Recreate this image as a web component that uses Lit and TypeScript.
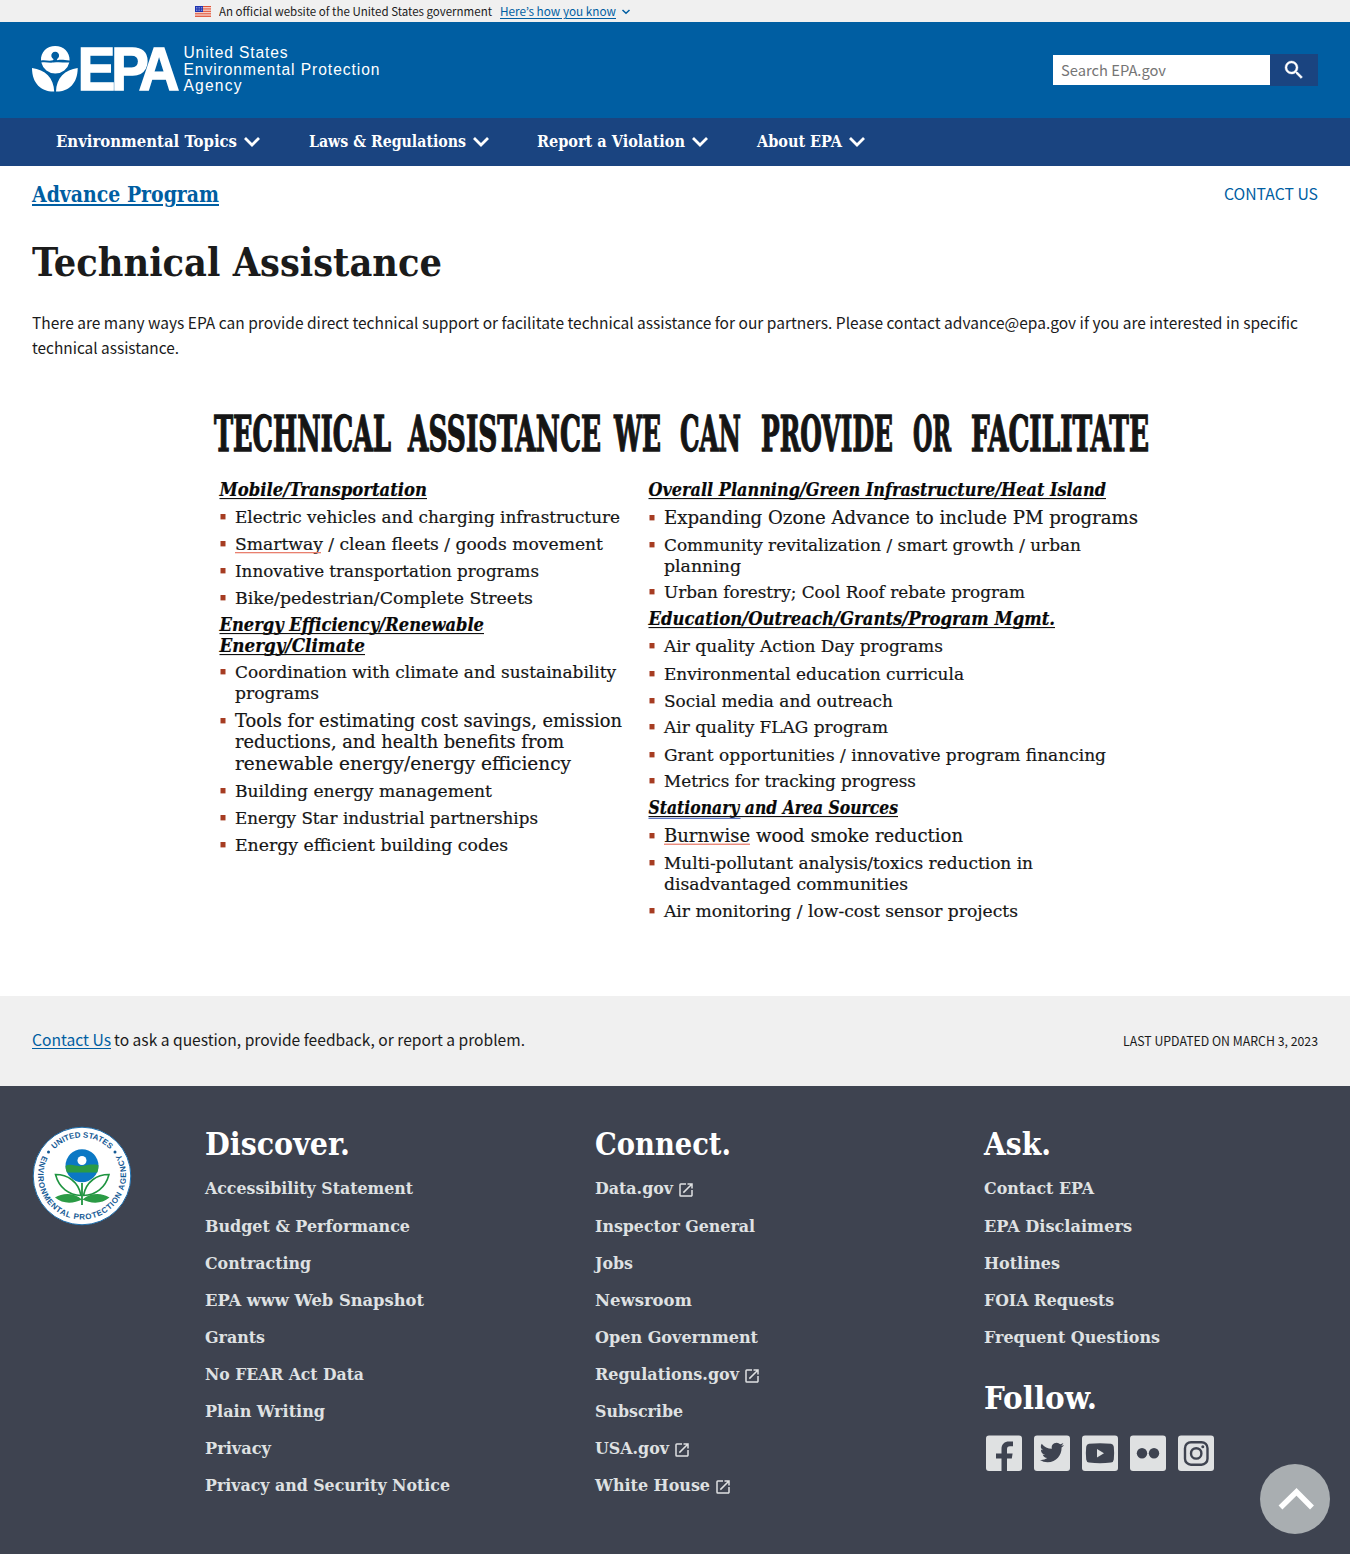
import { LitElement, html, css, svg, nothing } from "lit";
import { customElement, property } from "lit/decorators.js";

/** One line of text set to an exact measure. */
@customElement("epa-line")
export class EpaLine extends LitElement {
  @property({ type: Number }) measure = 0;
  static styles = css`
    :host { display: inline-block; white-space: nowrap; text-align: left; }
    .t { display: inline-block; transform-origin: 0 50%; text-decoration: var(--line-decoration, none); text-underline-offset: var(--line-offset, 2px); }
  `;
  render() { return html`<span class="t"><slot></slot></span>`; }
  firstUpdated() {
    this.fit();
    document.fonts.ready.then(() => this.fit());
  }
  fit() {
    const t = this.renderRoot.querySelector(".t") as HTMLElement;
    t.style.transform = "none";
    const natural = t.getBoundingClientRect().width;
    if (!natural || !this.measure) return;
    this.style.width = `${this.measure}px`;
    t.style.transform = `scaleX(${this.measure / natural})`;
  }
}

type Row = [kind: "h" | "b" | "c", text: string, x2: number, y: number, size?: number];

const LEFT: Row[] = [
  ["h", "Mobile/Transportation", 427, 496],
  ["b", "Electric vehicles and charging infrastructure", 620, 523],
  ["b", "Smartway / clean fleets / goods movement", 603, 550],
  ["b", "Innovative transportation programs", 539, 577],
  ["b", "Bike/pedestrian/Complete Streets", 533, 604],
  ["h", "Energy Efficiency/Renewable", 484, 631],
  ["h", "Energy/Climate", 365, 652],
  ["b", "Coordination with climate and sustainability", 616, 678],
  ["c", "programs", 319, 699],
  ["b", "Tools for estimating cost savings, emission", 622, 727, 18],
  ["c", "reductions, and health benefits from", 564, 748, 18],
  ["c", "renewable energy/energy efficiency", 571, 770, 18],
  ["b", "Building energy management", 492, 797],
  ["b", "Energy Star industrial partnerships", 538, 824],
  ["b", "Energy efficient building codes", 508, 851],
];
const RIGHT: Row[] = [
  ["h", "Overall Planning/Green Infrastructure/Heat Island", 1106, 496],
  ["b", "Expanding Ozone Advance to include PM programs", 1138, 524, 18],
  ["b", "Community revitalization / smart growth / urban", 1081, 551],
  ["c", "planning", 741, 572],
  ["b", "Urban forestry; Cool Roof rebate program", 1025, 598],
  ["h", "Education/Outreach/Grants/Program Mgmt.", 1055, 625],
  ["b", "Air quality Action Day programs", 943, 652],
  ["b", "Environmental education curricula", 964, 680],
  ["b", "Social media and outreach", 893, 707],
  ["b", "Air quality FLAG program", 888, 733],
  ["b", "Grant opportunities / innovative program financing", 1106, 761],
  ["b", "Metrics for tracking progress", 916, 787],
  ["h", "Stationary and Area Sources", 898, 814],
  ["b", "Burnwise wood smoke reduction", 963, 842, 18],
  ["b", "Multi-pollutant analysis/toxics reduction in", 1033, 869],
  ["c", "disadvantaged communities", 908, 890],
  ["b", "Air monitoring / low-cost sensor projects", 1018, 917],
];
const TITLE: [string, number, number][] = [
  ["TECHNICAL", 214, 391], ["ASSISTANCE", 408, 601], ["WE", 614, 661], ["CAN", 680, 741],
  ["PROVIDE", 761, 893], ["OR", 913, 951], ["FACILITATE", 971, 1149],
];
const SQUEEZE = 0.55;

@customElement("assistance-slide")
export class AssistanceSlide extends LitElement {
  static styles = css`
    :host { display: block; }
    svg { display: block; }
    text { font-family: "DejaVu Serif", serif; fill: #151515; stroke: #151515; stroke-width: .2px; }
    .title { font-family: "DejaVu Serif Condensed", "DejaVu Serif", serif; font-weight: 700; font-size: 48.5px; stroke-width: 1.300px; }
    .h { font-weight: 700; font-style: italic; fill: #080808; }
  `;
  col(rows: Row[], left: number) {
    return rows.map(([kind, text, x2, y, size]) => {
      const x = kind === "h" ? left : left + 15.5;
      return svg`
        ${kind === "b" ? svg`<rect x=${left + 1} y=${y - 9} width="5" height="5.4" fill="#a63c22"></rect>` : nothing}
        <text class=${kind} x=${x} y=${y} font-size=${size ?? (kind === "h" ? 17.7 : 17.4)} textLength=${x2 - x} lengthAdjust="spacingAndGlyphs">${text}</text>
        ${kind === "h" ? svg`<rect x=${left} y=${y + 2} width=${x2 - left} height="1.1" fill="#111"></rect>` : nothing}`;
    });
  }
  render() {
    return html`<svg width="960" height="580" viewBox="195 385 960 580">
      ${TITLE.map(([w, a, b]) => svg`<g transform=${`translate(${a} 451) scale(${SQUEEZE} 1)`}><text class="title" textLength=${(b - a) / SQUEEZE} lengthAdjust="spacingAndGlyphs">${w}</text></g>`)}
      ${this.col(LEFT, 219.5)}
      ${this.col(RIGHT, 648.5)}
      <rect x="235" y="552" width="86" height="1.3" fill="#e9806f"></rect>
      <rect x="664" y="843.6" width="86" height="1.3" fill="#e9806f"></rect>
      <rect x="648.5" y="817.8" width="92" height="1.2" fill="#5b74c8"></rect>
    </svg>`;
  }
}

const ext = html`<svg class="ext" width="18" height="18" viewBox="0 0 24 24"><path fill="currentColor" d="M19 19H5V5h7V3H5a2 2 0 0 0-2 2v14a2 2 0 0 0 2 2h14c1.100 0 2-.9 2-2v-7h-2v7zM14 3v2h3.590l-9.830 9.830 1.410 1.410L19 6.410V10h2V3h-7z"/></svg>`;
const chev = html`<svg class="chev" width="18" height="12" viewBox="0 0 18 12"><path d="M2 2l7 7 7-7" fill="none" stroke="#fff" stroke-width="2.800"/></svg>`;

type Link = [text: string, width: number, external?: boolean];
const DISCOVER: Link[] = [["Accessibility Statement", 208], ["Budget & Performance", 205], ["Contracting", 106], ["EPA www Web Snapshot", 219], ["Grants", 60], ["No FEAR Act Data", 159], ["Plain Writing", 120], ["Privacy", 66], ["Privacy and Security Notice", 245]];
const CONNECT: Link[] = [["Data.gov", 78, true], ["Inspector General", 160], ["Jobs", 38], ["Newsroom", 97], ["Open Government", 163], ["Regulations.gov", 144, true], ["Subscribe", 88], ["USA.gov", 74, true], ["White House", 115, true]];
const ASK: Link[] = [["Contact EPA", 110], ["EPA Disclaimers", 148], ["Hotlines", 76], ["FOIA Requests", 130], ["Frequent Questions", 176]];
const NAV: [string, number][] = [["Environmental Topics", 181], ["Laws & Regulations", 157], ["Report a Violation", 148], ["About EPA", 85]];

@customElement("app-root")
export class AppRoot extends LitElement {
  static styles = css`
    :host { display: block; width: 1350px; height: 1554px; background: #fff; color: #1b1b1b;
      font-family: "Noto Sans CJK KR", "Open Sans", sans-serif; font-size: 15.3px; line-height: 25px; overflow: hidden; position: relative; }
    svg { display: block; flex: none; }
    a { color: #005ea2; cursor: pointer; }
    .u { --line-decoration: underline 1px; }
    .serif { font-family: "DejaVu Serif Condensed", "DejaVu Serif", serif; font-weight: 700; }
    .banner { height: 22px; background: #f0f0f0; display: flex; align-items: center; padding-left: 195px; font-size: 11.4px; line-height: 22px; }
    .banner .flag { margin-right: 8px; }
    .banner a { margin-left: 8px; }
    .banner .mini { margin-left: 5px; margin-top: 2px; }
    .head { height: 96px; background: #005ea2; display: flex; justify-content: space-between; padding: 0 32px; }
    .brand { margin-top: 6px; }
    .brand text { font-family: "Liberation Sans", sans-serif; fill: #fff; }
    .epa { font-weight: 700; font-size: 60.5px; stroke: #fff; stroke-width: 1.6px; }
    .sub { font-size: 15.6px; }
    .search { display: flex; height: 32px; margin-top: 32px; }
    .field { width: 209px; height: 30px; margin-top: 1px; background: #fff; color: #757575; padding-left: 8px; line-height: 30px; font-size: 14.500px; }
    .go { width: 48px; height: 32px; background: #1a4480; display: flex; align-items: center; justify-content: center; }
    .nav { height: 48px; background: #1a4480; color: #fff; display: flex; padding-left: 56px; font-size: 16px; line-height: 46px; }
    .item { display: flex; align-items: center; margin-right: 47.500px; }
    .item .chev { margin-left: 6px; }
    .main { height: 830px; padding: 0 32px; box-sizing: border-box; }
    .crumb { display: flex; justify-content: space-between; padding-top: 12px; height: 32px; line-height: 30px; }
    .site { font-size: 21.800px; line-height: 34px; --line-decoration: underline 2px; --line-offset: 2px; }
    h1 { margin: 28px 0 0; font-size: 39px; line-height: 48px; height: 48px; }
    h1 epa-line { display: block; }
    .intro { margin: 24px 0 0; height: 50px; }
    .intro epa-line { display: block; height: 25px; }
    assistance-slide { margin: 25px 0 0 163px; }
    .feedback { height: 90px; background: #f0f0f0; padding: 0 32px; display: flex; justify-content: space-between; line-height: 86px; }
    .ask { display: flex; gap: 3px; }
    .updated { font-size: 12.500px; line-height: 90px; }
    .foot { height: 468px; background: #3e4350; display: grid; grid-template-columns: 173px 390px 389px 1fr; padding: 0 0 0 32px; color: #fff; }
    .seal { margin-top: 40px; }
    .seal text { font-family: "Liberation Sans", sans-serif; font-size: 8px; font-weight: 700; fill: #155a95; }
    h2 { margin: 38px 0 5.800px; font-size: 32px; line-height: 40px; height: 40px; }
    h2.follow { margin: 22.200px 0 17px; }
    .link { display: flex; height: 37.150px; align-items: center; color: #dfe1e2; font-size: 17.400px; line-height: 34px; }
    .ext { margin: 3px 0 0 4px; }
    .social { display: flex; gap: 12px; padding-left: 2px; }
    .top { position: absolute; left: 1260px; top: 1464px; }
  `;
  list(items: Link[]) {
    return items.map(([t, w, e]) => html`<div class="link serif"><epa-line measure=${w}>${t}</epa-line>${e ? ext : nothing}</div>`);
  }
  render() {
    return html`
      <div class="banner">
        <svg class="flag" width="16" height="11" viewBox="0 0 16 11"><rect width="16" height="11" fill="#fff"/><path d="M0 .5h16M0 2.200h16M0 3.900h16M0 5.600h16M0 7.300h16M0 9h16M0 10.600h16" stroke="#db3e1f" stroke-width=".9"/><rect width="8" height="6" fill="#1e33b1"/><path d="M1 1.500h7M1 3h7M1 4.500h7" stroke="#fff" stroke-width=".6" stroke-dasharray=".7 1"/></svg>
        <epa-line measure="273">An official website of the United States government</epa-line>
        <a class="u"><epa-line measure="116">Here’s how you know</epa-line></a>
        <svg class="mini" width="10" height="8" viewBox="0 0 10 8"><path d="M1.500 2L5 5.300 8.500 2" fill="none" stroke="#005ea2" stroke-width="1.500"/></svg>
      </div>
      <div class="head">
        <svg class="brand" width="350" height="84" viewBox="32 28 350 84">
          <path fill="#fff" d="M41 60.500C40.500 52 47 46 55.200 46S70 52 69.600 60.500C64 60 61 59.300 57.500 60.300L56.800 59.200A3.900 3.900 0 1 0 53.600 59.200L53 60.300C49 61.200 46 60 41 60.500zM41.300 62.600C46 61.800 49 63.200 53.500 62.600 60 61.400 64 63 69.300 62.400A14.300 14.300 0 0 1 55.300 73.500 14.300 14.300 0 0 1 41.300 62.600z"/>
          <path fill="#fff" d="M32 68C45 69.500 54 78 54.200 91.600 42 92 32 84 32 68zM77.700 68C65 69.500 56.300 78 56 91.600 68 92 77.700 84 77.700 68z"/>
          <g transform="translate(77.800 89.800) scale(.93 1)"><text class="epa" x="0 36 65.500" y="0">EPA</text></g>
          <text class="sub" x="183.500" y="58" textLength="104">United States</text>
          <text class="sub" x="183.500" y="74.700" textLength="196">Environmental Protection</text>
          <text class="sub" x="183.500" y="91.200" textLength="58">Agency</text>
        </svg>
        <div class="search">
          <div class="field"><epa-line measure="105">Search EPA.gov</epa-line></div>
          <div class="go"><svg width="24" height="24" viewBox="0 0 24 24"><path fill="#fff" stroke="#fff" stroke-width=".4" d="M15.500 14h-.79l-.28-.27A6.470 6.470 0 0 0 16 9.500 6.500 6.500 0 1 0 9.500 16c1.610 0 3.090-.59 4.230-1.570l.27.28v.79l5 4.990L20.490 19l-4.990-5zm-6 0C7.010 14 5 11.990 5 9.500S7.010 5 9.500 5 14 7.010 14 9.500 11.990 14 9.500 14z"/></svg></div>
        </div>
      </div>
      <div class="nav serif">${NAV.map(([t, w]) => html`<div class="item"><epa-line measure=${w}>${t}</epa-line>${chev}</div>`)}</div>
      <div class="main">
        <div class="crumb">
          <a class="site serif"><epa-line measure="187">Advance Program</epa-line></a>
          <a><epa-line measure="94">CONTACT US</epa-line></a>
        </div>
        <h1 class="serif"><epa-line measure="410">Technical Assistance</epa-line></h1>
        <p class="intro">
          <epa-line measure="1266">There are many ways EPA can provide direct technical support or facilitate technical assistance for our partners. Please contact advance@epa.gov if you are interested in specific</epa-line>
          <epa-line measure="147">technical assistance.</epa-line>
        </p>
        <assistance-slide></assistance-slide>
      </div>
      <div class="feedback">
        <div class="ask"><a class="u"><epa-line measure="79">Contact Us</epa-line></a><epa-line measure="411">to ask a question, provide feedback, or report a problem.</epa-line></div>
        <epa-line class="updated" measure="195">LAST UPDATED ON MARCH 3, 2023</epa-line>
      </div>
      <div class="foot">
        <svg class="seal" width="100" height="100" viewBox="0 0 100 100">
          <circle cx="50" cy="50" r="48.800" fill="#fff" stroke="#1d6fae" stroke-width="1"/>
          <defs><path id="arcTop" d="M11.500 50A38.500 38.500 0 0 1 88.500 50"/><path id="arcBot" d="M14.500 23.500A44 44 0 1 0 85.500 23.500"/></defs>
          <text><textPath href="#arcTop" startOffset="29.500" textLength="62">UNITED STATES</textPath></text>
          <text><textPath href="#arcBot" startOffset="7" textLength="181">ENVIRONMENTAL PROTECTION AGENCY</textPath></text>
          <circle cx="16.500" cy="26" r="1.500" fill="#155a95"/><circle cx="83" cy="26" r="1.500" fill="#155a95"/>
          <circle cx="50" cy="39.700" r="16.500" fill="#0b78c4"/>
          <path d="M33.600 40c6-3 10 1 16 0s10-2 16.700-1c.3 2.500-.2 5-1 7.500H35c-1-2.300-1.400-4-1.400-6.500z" fill="#2b9b45"/>
          <circle cx="50" cy="34.500" r="4.500" fill="#fff"/>
          <path d="M50 57v22" stroke="#1f9440" stroke-width="1.800"/>
          <path d="M23.500 48.500c12 0 23 7 25.500 21-12-.5-22-7.500-25.500-21zM77 48.500c-12 0-23 7-25.500 21 12-.5 22-7.500 25.500-21z" fill="#fff" stroke="#1f9440" stroke-width="1.600"/>
          <path d="M23 71.500c8-5 19-5 27 2-8 4-19 5-27-2zM77.500 71.500c-8-5-19-5-27 2 8 4 19 5 27-2z" fill="#2b9b45"/>
        </svg>
        <div><h2 class="serif"><epa-line measure="145">Discover.</epa-line></h2>${this.list(DISCOVER)}</div>
        <div><h2 class="serif"><epa-line measure="136">Connect.</epa-line></h2>${this.list(CONNECT)}</div>
        <div><h2 class="serif"><epa-line measure="67">Ask.</epa-line></h2>${this.list(ASK)}
          <h2 class="serif follow"><epa-line measure="113">Follow.</epa-line></h2>
          <div class="social">
            <svg width="36" height="36" viewBox="0 0 36 36"><rect y=".5" width="36" height="35.500" rx="3" fill="#dfe1e2"/><path fill="#3e4350" d="M15.500 36V23.500H10V18.500h5.500V14c0-5 3-7.500 7.500-7.500h4v4.800h-3c-2.200 0-3 1-3 2.900v4.300h5.600l-.8 5H21V36z"/></svg>
            <svg width="36" height="36" viewBox="0 0 36 36"><rect y=".5" width="36" height="35.500" rx="3" fill="#dfe1e2"/><path fill="#3e4350" transform="translate(6 7.500)" d="M24 2.560a9.830 9.830 0 0 1-2.830.78 4.940 4.940 0 0 0 2.170-2.730 9.860 9.860 0 0 1-3.130 1.200 4.920 4.920 0 0 0-8.380 4.490A13.980 13.980 0 0 1 1.670 1.150a4.920 4.920 0 0 0 1.520 6.570 4.900 4.900 0 0 1-2.230-.61v.06a4.930 4.930 0 0 0 3.950 4.830 4.900 4.900 0 0 1-2.220.08 4.930 4.930 0 0 0 4.600 3.420A9.870 9.870 0 0 1 0 17.540a13.940 13.940 0 0 0 7.550 2.210c9.050 0 14-7.500 14-14v-.64A10 10 0 0 0 24 2.560z"/></svg>
            <svg width="36" height="36" viewBox="0 0 36 36"><rect y=".5" width="36" height="35.500" rx="3" fill="#dfe1e2"/><path fill="#3e4350" d="M7 8.800q11-1.200 22 0 2.500.3 2.800 3 .7 6.500 0 12.800-.3 2.700-2.800 3-11 1.200-22 0-2.500-.3-2.800-3-.7-6.300 0-12.800.3-2.700 2.800-3z"/><path fill="#dfe1e2" d="M15 14v8.500l7-4.250z"/></svg>
            <svg width="36" height="36" viewBox="0 0 36 36"><rect y=".5" width="36" height="35.500" rx="3" fill="#dfe1e2"/><circle cx="12" cy="18.200" r="5.200" fill="#3e4350"/><circle cx="24" cy="18.200" r="5.200" fill="#3e4350"/></svg>
            <svg width="36" height="36" viewBox="0 0 36 36"><rect y=".5" width="36" height="35.500" rx="3" fill="#dfe1e2"/><rect x="7" y="7.200" width="22.500" height="22.500" rx="6" fill="none" stroke="#3e4350" stroke-width="2.400"/><circle cx="18.200" cy="18.400" r="5.200" fill="none" stroke="#3e4350" stroke-width="2.400"/><circle cx="24.800" cy="11.800" r="1.500" fill="#3e4350"/></svg>
          </div>
        </div>
      </div>
      <svg class="top" width="70" height="70" viewBox="0 0 70 70"><circle cx="35" cy="35" r="35" fill="#a9aeb1"/><path d="M20.500 43.500L36.500 27.800 52 43.500" fill="none" stroke="#fff" stroke-width="5.500"/></svg>
    `;
  }
}
